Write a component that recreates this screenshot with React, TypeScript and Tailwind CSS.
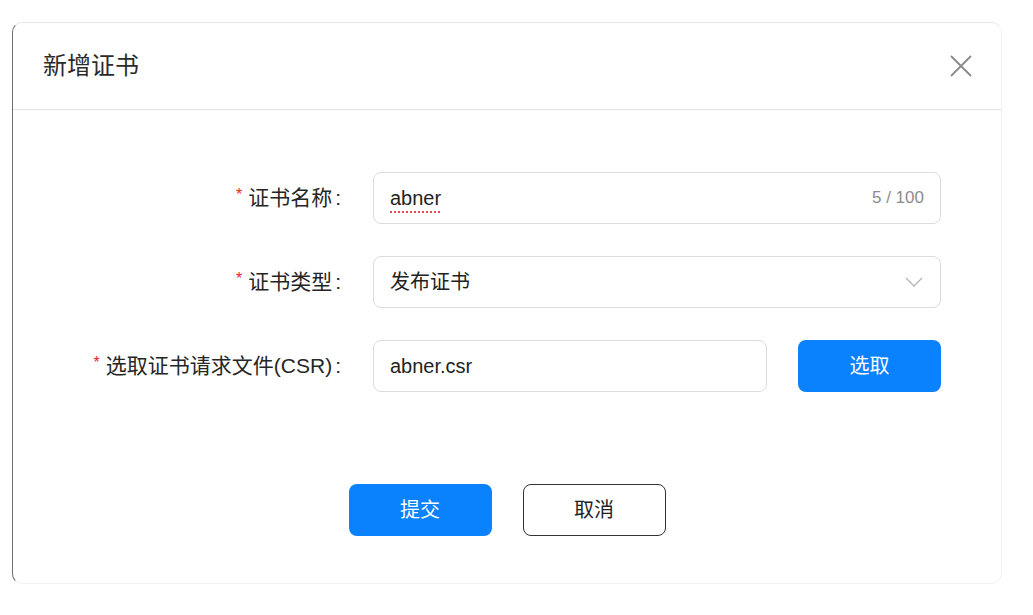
import { useState } from "react"

const font = { fontFamily: '"Liberation Sans", "Noto Sans CJK SC", sans-serif' }

function Label({ text }: { text: string }) {
  return (
    <div className="flex items-center justify-end h-[52px] text-[21px] text-[#262626]">
      <span className="text-[#f5222d] text-[16px] mr-[6px] -mt-[6px]">*</span>
      <span>{text}</span>
      <span className="ml-[3px] mr-[2px]">:</span>
    </div>
  )
}

export default function App() {
  const [name] = useState("abner")

  return (
    <div className="w-[1033px] h-[615px] bg-white pt-[22px] pl-[12px]" style={font}>
      <div className="w-[990px] h-[562px] rounded-[10px] border border-[#f2f2f2] border-l-[1.5px] border-l-[#6e6e6e] border-t-[#e8e8e8] bg-white flex flex-col">
        {/* ── Header ── */}
        <div className="h-[87px] flex items-center justify-between pl-[30px] pr-[28px] border-b border-[#e3e3e3]">
          <h2 className="text-[24px] text-[#2b2b2b] font-normal">新增证书</h2>
          <button className="w-[24px] h-[24px] flex items-center justify-center text-[#8a8a8a]">
            <svg width="24" height="24" viewBox="0 0 24 24" fill="none" stroke="currentColor" strokeWidth="1.8">
              <path d="M2 2 L22 22 M22 2 L2 22" />
            </svg>
          </button>
        </div>

        {/* ── Form ── */}
        <div className="pt-[62px] pr-[60px] grid grid-cols-[330px_1fr] gap-x-[30px] gap-y-[32px]">
          <Label text="证书名称" />
          <div className="h-[52px] rounded-[8px] border border-[#dcdcdc] flex items-center px-[16px]">
            <span className="flex-1 text-[20px] text-[#222] underline decoration-dotted decoration-[#e5484d] decoration-2 underline-offset-[6px]">
              {name}
            </span>
            <span className="text-[17px] text-[#8c8c8c]">{name.length} / 100</span>
          </div>

          <Label text="证书类型" />
          <div className="h-[52px] rounded-[8px] border border-[#dcdcdc] flex items-center px-[16px]">
            <span className="flex-1 text-[20px] text-[#222]">发布证书</span>
            <svg width="18" height="10" viewBox="0 0 18 10" fill="none" stroke="#b5b5b5" strokeWidth="1.3" className="mr-[1px]">
              <path d="M1 1 L9 9 L17 1" />
            </svg>
          </div>

          <Label text="选取证书请求文件(CSR)" />
          <div className="flex gap-[31px]">
            <div className="flex-1 h-[52px] rounded-[8px] border border-[#dcdcdc] flex items-center px-[16px]">
              <span className="text-[20px] text-[#222]">abner.csr</span>
            </div>
            <button className="w-[143px] h-[52px] rounded-[8px] bg-[#0a82fd] text-white text-[20px]">选取</button>
          </div>
        </div>

        {/* ── Footer ── */}
        <div className="mt-[92px] flex justify-center gap-[31px]">
          <button className="w-[143px] h-[52px] rounded-[8px] bg-[#0a82fd] text-white text-[20px]">提交</button>
          <button className="w-[143px] h-[52px] rounded-[8px] border-[1.5px] border-[#333] bg-white text-[#222] text-[20px]">取消</button>
        </div>
      </div>
    </div>
  )
}
